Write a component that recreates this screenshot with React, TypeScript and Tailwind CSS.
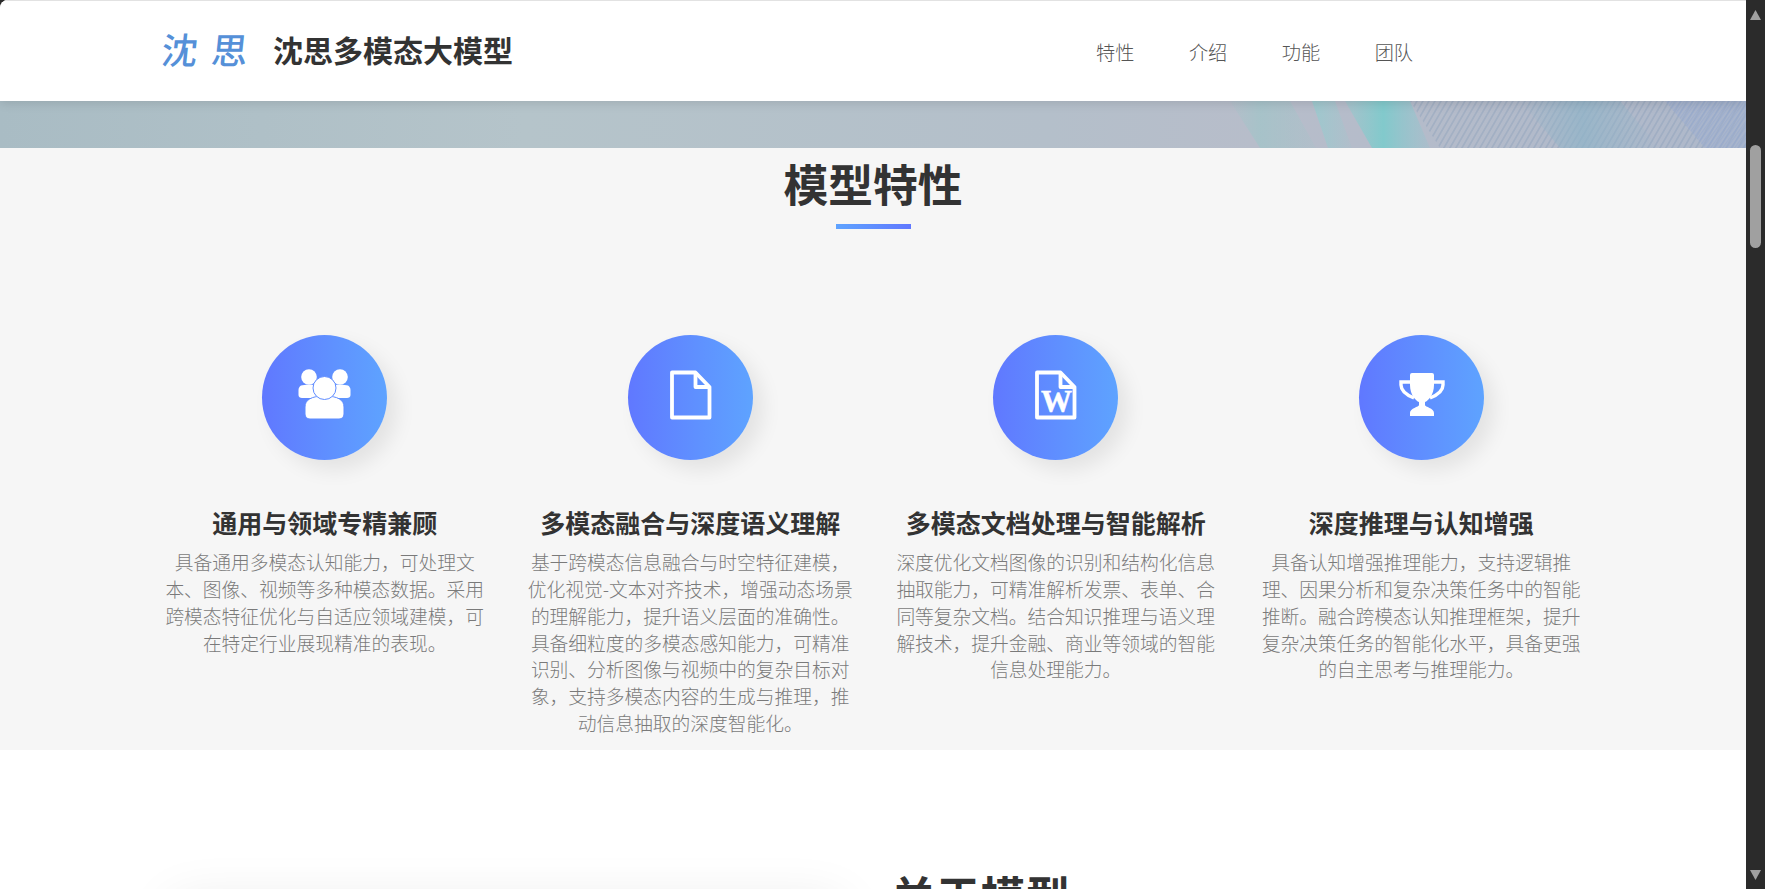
const features = [
  {
    icon: "users",
    title: "通用与领域专精兼顾",
    text: "具备通用多模态认知能力，可处理文本、图像、视频等多种模态数据。采用跨模态特征优化与自适应领域建模，可在特定行业展现精准的表现。",
  },
  {
    icon: "file",
    title: "多模态融合与深度语义理解",
    text: "基于跨模态信息融合与时空特征建模，优化视觉-文本对齐技术，增强动态场景的理解能力，提升语义层面的准确性。具备细粒度的多模态感知能力，可精准识别、分析图像与视频中的复杂目标对象，支持多模态内容的生成与推理，推动信息抽取的深度智能化。",
  },
  {
    icon: "word",
    title: "多模态文档处理与智能解析",
    text: "深度优化文档图像的识别和结构化信息抽取能力，可精准解析发票、表单、合同等复杂文档。结合知识推理与语义理解技术，提升金融、商业等领域的智能信息处理能力。",
  },
  {
    icon: "trophy",
    title: "深度推理与认知增强",
    text: "具备认知增强推理能力，支持逻辑推理、因果分析和复杂决策任务中的智能推断。融合跨模态认知推理框架，提升复杂决策任务的智能化水平，具备更强的自主思考与推理能力。",
  },
];

const navItems = ["特性", "介绍", "功能", "团队"];

function FeatureIcon({ name }: { name: string }) {
  return (
    <svg width="125" height="125" viewBox="0 0 125 125" className="block">
      {name === "users" && (
        <g fill="#fff">
          <circle cx="47" cy="42" r="7.800" />
          <circle cx="78" cy="42" r="7.800" />
          <path d="M39 50.500c3-1 13-1 16 0v12.500H40c-2 0-3.500-1-3.500-3v-5c0-2 1-3.500 2.500-4.500z" />
          <path d="M86 50.500c-3-1-13-1-16 0v12.500h15c2 0 3.500-1 3.500-3v-5c0-2-1-3.500-2.500-4.500z" />
          <path
            d="M43 79V72c0-7 6-11 19.500-11S82 65 82 72v7c0 3-2 5-5 5H48c-3 0-5-2-5-5z"
            stroke="#5f8cff"
            strokeWidth="1"
          />
          <circle cx="62.500" cy="53" r="11.500" stroke="#5f8cff" strokeWidth="1" />
        </g>
      )}
      {(name === "file" || name === "word") && (
        <g fill="none" stroke="#fff" strokeWidth="3.800" strokeLinejoin="round">
          <path d="M44 37.500H67.500L81.500 52V82.500H44Z" />
          <path d="M67.500 37.500V52H81.500" />
        </g>
      )}
      {name === "word" && (
        <text
          x="63.500"
          y="77"
          textAnchor="middle"
          fill="#fff"
          fontSize="31"
          fontWeight="700"
          fontFamily="'Liberation Serif', serif"
          stroke="#fff"
          strokeWidth="0.500"
        >
          W
        </text>
      )}
      {name === "trophy" && (
        <g>
          <path
            d="M53 38H73Q75 38 75 40V50C75 60 69 66 66 67V70C66 72 75 73 75 78V81H51V78C51 73 60 72 60 70V67C57 66 51 60 51 50V40Q51 38 53 38Z"
            fill="#fff"
          />
          <path
            d="M51 47H42V50C42 57 50 61 55 63M75 47H84V50C84 57 76 61 71 63"
            fill="none"
            stroke="#fff"
            strokeWidth="3.400"
          />
        </g>
      )}
    </svg>
  );
}

function Banner() {
  return (
    <svg viewBox="0 0 1746 47" preserveAspectRatio="none" className="block h-[47px] w-full">
      <defs>
        <linearGradient id="bannerBase" x1="0" x2="1" y1="0" y2="0">
          <stop offset="0" stopColor="#a9bcc4" />
          <stop offset="0.3" stopColor="#b5c4ca" />
          <stop offset="0.6" stopColor="#b4bfca" />
          <stop offset="0.72" stopColor="#b7bdca" />
          <stop offset="1" stopColor="#aeb8ca" />
        </linearGradient>
        <linearGradient id="softBand" x1="0" x2="1" y1="0" y2="0">
          <stop offset="0" stopColor="#9cc6c8" stopOpacity="0.1" />
          <stop offset="0.35" stopColor="#9cc6c8" stopOpacity="0.6" />
          <stop offset="1" stopColor="#9cc6c8" stopOpacity="0.15" />
        </linearGradient>
        <linearGradient id="thinBand" x1="0" x2="1" y1="0" y2="0">
          <stop offset="0" stopColor="#92cdcf" stopOpacity="0.7" />
          <stop offset="1" stopColor="#92cdcf" stopOpacity="0.1" />
        </linearGradient>
        <linearGradient id="tealBand" x1="0" x2="1" y1="0" y2="0">
          <stop offset="0" stopColor="#86cdcd" stopOpacity="0.3" />
          <stop offset="0.45" stopColor="#7ccbcc" stopOpacity="0.9" />
          <stop offset="1" stopColor="#8cc6cf" stopOpacity="0.2" />
        </linearGradient>
        <linearGradient id="blueBand" x1="0" x2="1" y1="0" y2="0">
          <stop offset="0" stopColor="#8fb4c8" stopOpacity="0" />
          <stop offset="0.45" stopColor="#8fb4c8" stopOpacity="0.7" />
          <stop offset="1" stopColor="#8fb4c8" stopOpacity="0" />
        </linearGradient>
        <pattern id="stripes" width="6" height="47" patternUnits="userSpaceOnUse" patternTransform="skewX(-30)">
          <rect width="2" height="47" fill="#8299b8" fillOpacity="0.35" />
        </pattern>
        <pattern id="stripesDense" width="4" height="47" patternUnits="userSpaceOnUse" patternTransform="skewX(-36)">
          <rect width="1.500" height="47" fill="#8fa4cf" fillOpacity="0.4" />
        </pattern>
      </defs>
      <rect width="1746" height="47" fill="url(#bannerBase)" />
      <polygon points="1230,0 1290,0 1316,47 1260,47" fill="url(#softBand)" />
      <polygon points="1312,0 1335,0 1352,47 1328,47" fill="url(#thinBand)" />
      <polygon points="1345,0 1410,0 1430,47 1372,47" fill="url(#tealBand)" />
      <polygon points="1410,0 1746,0 1746,47 1440,47" fill="url(#stripes)" />
      <polygon points="1520,0 1620,0 1660,47 1560,47" fill="url(#blueBand)" />
      <polygon points="1665,0 1746,0 1746,47 1705,47" fill="#9fb0d2" fillOpacity="0.35" />
      <polygon points="1665,0 1746,0 1746,47 1705,47" fill="url(#stripesDense)" />
    </svg>
  );
}

function FakeScrollbar() {
  return (
    <div className="flex w-[19px] shrink-0 flex-col items-center bg-[#2b2b2b] pb-[9px] pt-[10px]">
      <svg width="11" height="10" viewBox="0 0 11 10" className="block">
        <path d="M5.500 0L11 10H0Z" fill="#a0a0a0" />
      </svg>
      <div className="mt-[125px] h-[103px] w-[11px] rounded-full bg-[#a0a0a0]" />
      <svg width="11" height="10" viewBox="0 0 11 10" className="mt-auto block">
        <path d="M5.500 10L11 0H0Z" fill="#a0a0a0" />
      </svg>
    </div>
  );
}

export default function App() {
  return (
    <div className="flex h-screen overflow-hidden bg-[#2b2b2b] font-['Noto_Sans_CJK_SC','Liberation_Sans',sans-serif]">
      <div className="h-full min-w-0 flex-1 overflow-hidden rounded-tl-[8px] bg-white">
        <header className="relative z-10 flex h-[101px] items-center border-t border-[#e2e2e2] bg-white pl-[162px] pr-[333px] shadow-[0_2px_10px_rgba(0,0,0,0.12)]">
          <span className="mb-[7px] w-[111px] -skew-x-6 text-[36px] font-medium leading-none tracking-[14px] text-[#5590d8]">
            沈思
          </span>
          <span className="mb-[4px] text-[30px] font-bold leading-none text-[#333]">沈思多模态大模型</span>
          <nav className="ml-auto mt-[4px] flex gap-[54.5px]">
            {navItems.map((item) => (
              <a key={item} className="text-[19.2px] font-light leading-none text-[#555]">
                {item}
              </a>
            ))}
          </nav>
        </header>

        <Banner />

        <section className="flex h-[602px] flex-col items-center bg-[#f6f6f6] pt-[8px]">
          <h2 className="text-[44.8px] font-bold leading-[54px] text-[#333]">模型特性</h2>
          <div className="mt-[14px] h-[5px] w-[75px] bg-gradient-to-r from-[#5fa3ff] to-[#6078ff]" />

          <div className="mt-[106px] grid w-[1462px] grid-cols-4">
            {features.map((f) => (
              <div key={f.title} className="flex flex-col items-center px-[18px] text-center">
                <div className="h-[125px] w-[125px] rounded-full bg-gradient-to-r from-[#6078ff] to-[#5ea3ff] shadow-[10px_10px_20px_rgba(0,0,0,0.08)]">
                  <FeatureIcon name={f.icon} />
                </div>
                <h3 className="mt-[44px] text-[25px] font-bold leading-[36px] text-[#333]">{f.title}</h3>
                <p className="mt-[9px] text-[18.75px] font-light leading-[26.85px] text-[#7a7a7a]">{f.text}</p>
              </div>
            ))}
          </div>
        </section>

        <section className="flex items-start bg-white pl-[172px]">
          <div className="mt-[142px] h-[300px] w-[670px] shrink-0 bg-white shadow-[0_10px_50px_rgba(0,0,0,0.09)]" />
          <h2 className="ml-[49px] mt-[118px] text-[44.8px] font-bold leading-[54px] text-[#333]">关于模型</h2>
        </section>
      </div>
      <FakeScrollbar />
    </div>
  );
}
